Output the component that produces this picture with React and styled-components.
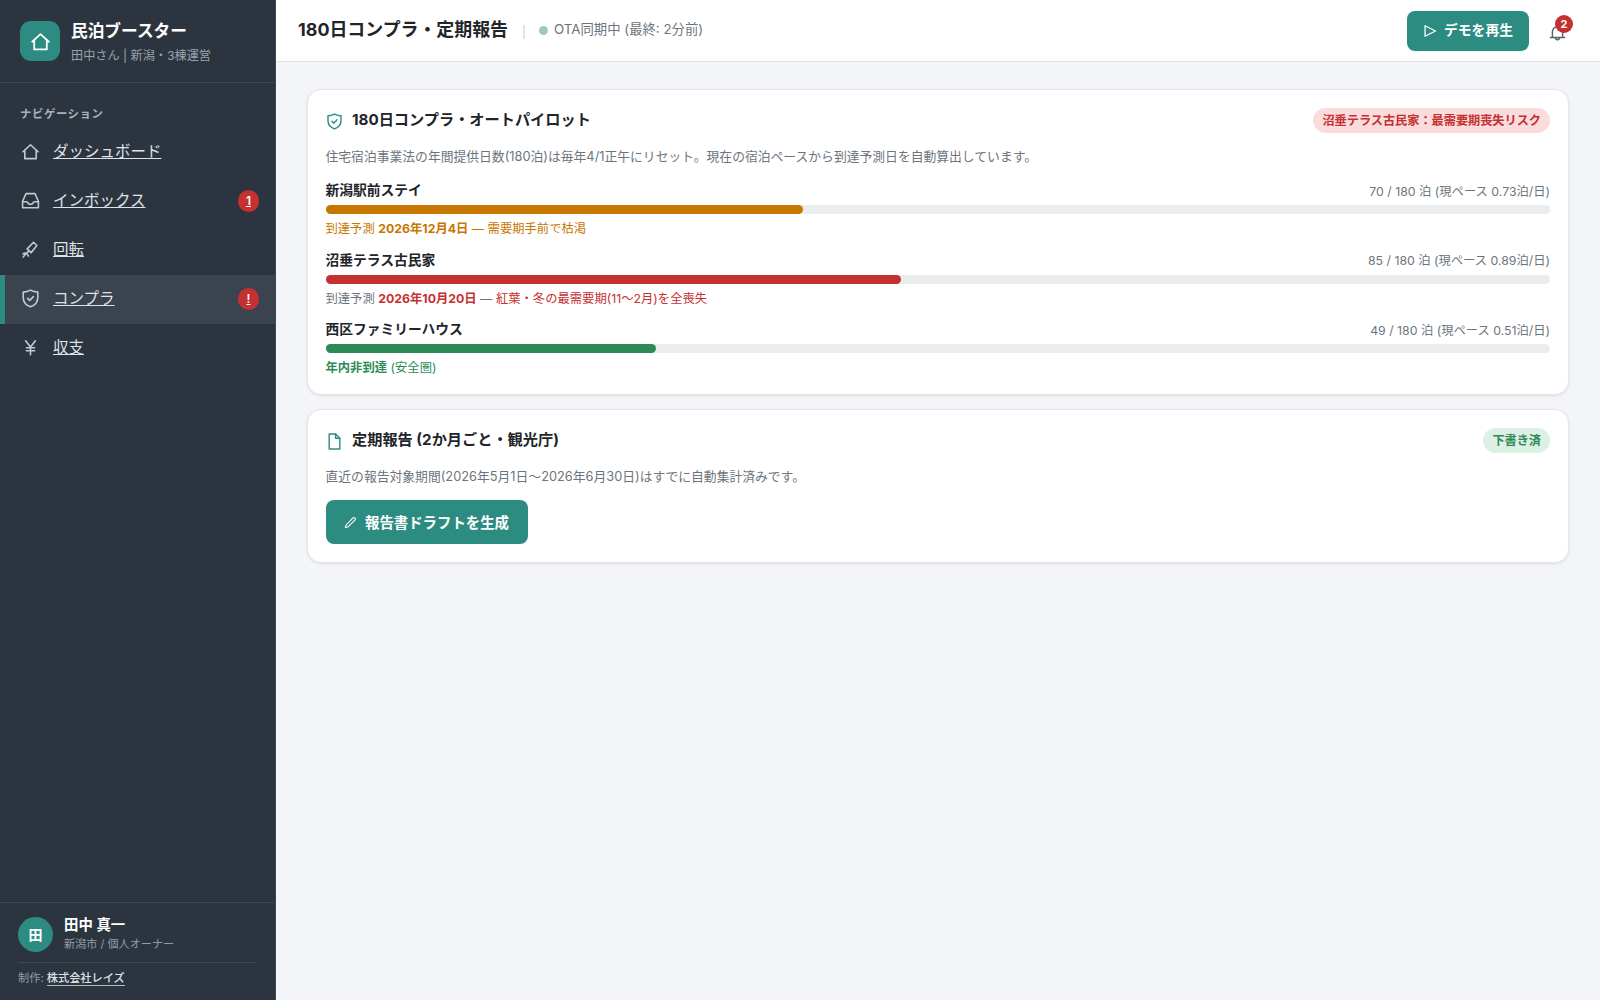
import React from "react";
import styled, { createGlobalStyle } from "styled-components";

const GlobalStyle = createGlobalStyle`
  * {
    box-sizing: border-box;
    margin: 0;
    padding: 0;
  }
  body {
    font-family: Inter, "Noto Sans CJK JP", sans-serif;
    background: #f4f5f8;
    color: #212529;
    overflow: hidden;
  }
`;

const Tone = styled.span`
  color: ${(p) => p.$color};
`;

const paths = {
  home: (
    <>
      <path d="M2.5 12.3 12 3.5l9.500 8.800" />
      <path d="M4.800 10.600V21h14.400V10.600" />
    </>
  ),
  inbox: (
    <>
      <path d="M6.300 3.300h11.400L22 13v8.200H2V13z" />
      <path d="M2 13.500h5.200c1 0 1.400 3.400 4.800 3.400s3.800-3.400 4.800-3.400H22" />
    </>
  ),
  broom: (
    <>
      <path d="M15.800 2.800 20 7l-7.200 9-5-4.800z" />
      <path d="m10.200 13.600-3.600 3.600M2.500 17.500c3-1.800 5.500-1.200 6.800 2.800M6 17.500l-3.200 4" />
    </>
  ),
  shield: (
    <>
      <path d="M12 1.500c2.800 1.600 5.800 2.400 9.200 2.400V11c0 5.700-3.600 9.400-9.200 11.500C6.400 20.400 2.800 16.700 2.800 11V3.900c3.400 0 6.400-.8 9.200-2.400z" />
      <path d="m8.400 11.800 2.600 2.500 4.600-4.600" />
    </>
  ),
  yen: (
    <path d="M5.800 3.500l6.200 8 6.200-8M12 11.500V21M6.800 12.400h10.400M6.800 16.200h10.400" />
  ),
  file: (
    <>
      <path d="M4.500 1.500h9l6 6V22.500h-15z" />
      <path d="M13.500 1.500v6h6" />
    </>
  ),
  pencil: (
    <path d="M2.500 21.500l1.500-5L16.800 3.600a2.200 2.200 0 0 1 3.100 0l.5.500a2.200 2.200 0 0 1 0 3.100L7.500 20z" />
  ),
  play: <path d="M3.500 3v18L21.500 12z" />,
  bell: (
    <>
      <path d="M2 19h20M4.800 19V11a7.200 7.200 0 0 1 14.400 0v8" />
      <path d="M9 19.200a3 3 0 0 0 6 0" />
    </>
  ),
};

const Icon = ({ name, size = 19, stroke = 2 }) => (
  <svg
    width={size}
    height={size}
    viewBox="0 0 24 24"
    fill="none"
    stroke="currentColor"
    strokeWidth={stroke}
    strokeLinejoin="round"
    strokeLinecap="round"
  >
    {paths[name]}
  </svg>
);

const navItems = [
  { icon: "home", label: "ダッシュボード" },
  { icon: "inbox", label: "インボックス", badge: "1" },
  { icon: "broom", label: "回転" },
  { icon: "shield", label: "コンプラ", badge: "!", active: true },
  { icon: "yen", label: "収支" },
];

const properties = [
  {
    name: "新潟駅前ステイ",
    stat: "70 / 180 泊 (現ペース 0.73泊/日)",
    percent: 39,
    color: "#c77700",
    note: (
      <Tone $color="#c77700">
        到達予測 <b>2026年12月4日</b> — 需要期手前で枯渇
      </Tone>
    ),
  },
  {
    name: "沼垂テラス古民家",
    stat: "85 / 180 泊 (現ペース 0.89泊/日)",
    percent: 47,
    color: "#c53030",
    note: (
      <>
        到達予測{" "}
        <Tone $color="#c53030">
          <b>2026年10月20日</b>
        </Tone>{" "}
        — <Tone $color="#c53030">紅葉・冬の最需要期(11〜2月)を全喪失</Tone>
      </>
    ),
  },
  {
    name: "西区ファミリーハウス",
    stat: "49 / 180 泊 (現ペース 0.51泊/日)",
    percent: 27,
    color: "#2d8a57",
    note: (
      <Tone $color="#2d8a57">
        <b>年内非到達</b> (安全圏)
      </Tone>
    ),
  },
];

const App = () => {
  return (
    <Layout>
      <GlobalStyle />
      <Sidebar>
        <Brand>
          <Logo>
            <Icon name="home" size={21} />
          </Logo>
          <div>
            <BrandName>民泊ブースター</BrandName>
            <BrandSub>田中さん | 新潟・3棟運営</BrandSub>
          </div>
        </Brand>
        <NavLabel>ナビゲーション</NavLabel>
        <nav>
          {navItems.map((item) => (
            <NavItem key={item.label} $active={item.active} href="#">
              <Icon name={item.icon} />
              <NavText>{item.label}</NavText>
              {item.badge && <NavBadge>{item.badge}</NavBadge>}
            </NavItem>
          ))}
        </nav>
        <SideFooter>
          <User>
            <Avatar>田</Avatar>
            <div>
              <UserName>田中 真一</UserName>
              <UserSub>新潟市 / 個人オーナー</UserSub>
            </div>
          </User>
          <Credit>
            制作: <a href="#">株式会社レイズ</a>
          </Credit>
        </SideFooter>
      </Sidebar>
      <Main>
        <Topbar>
          <PageTitle>180日コンプラ・定期報告</PageTitle>
          <Divider />
          <SyncDot />
          <SyncText>OTA同期中 (最終: 2分前)</SyncText>
          <DemoButton>
            <Icon name="play" size={14} stroke={2.2} />
            デモを再生
          </DemoButton>
          <Bell>
            <Icon name="bell" size={17} />
            <BellBadge>2</BellBadge>
          </Bell>
        </Topbar>
        <Content>
          <Card $height={306}>
            <CardHead>
              <Icon name="shield" size={17} />
              <h2>180日コンプラ・オートパイロット</h2>
              <Pill $bg="#fbdcdc" $color="#c53030">
                沼垂テラス古民家：最需要期喪失リスク
              </Pill>
            </CardHead>
            <Description>
              住宅宿泊事業法の年間提供日数(180泊)は毎年4/1正午にリセット。現在の宿泊ペースから到達予測日を自動算出しています。
            </Description>
            <Properties>
              {properties.map((p) => (
                <div key={p.name}>
                  <PropertyHead>
                    <strong>{p.name}</strong>
                    <span>{p.stat}</span>
                  </PropertyHead>
                  <Track>
                    <Fill $color={p.color} style={{ width: `${p.percent}%` }} />
                  </Track>
                  <Note>{p.note}</Note>
                </div>
              ))}
            </Properties>
          </Card>
          <Card $height={154}>
            <CardHead>
              <Icon name="file" size={17} />
              <h2>定期報告 (2か月ごと・観光庁)</h2>
              <Pill $bg="#dcf0e4" $color="#2d8a57">
                下書き済
              </Pill>
            </CardHead>
            <Description>
              直近の報告対象期間(2026年5月1日〜2026年6月30日)はすでに自動集計済みです。
            </Description>
            <ReportButton>
              <Icon name="pencil" size={13} />
              報告書ドラフトを生成
            </ReportButton>
          </Card>
        </Content>
      </Main>
    </Layout>
  );
};

export default App;

const Layout = styled.div`
  display: flex;
  width: 100%;
  height: 100vh;
`;

const Sidebar = styled.aside`
  display: flex;
  flex-direction: column;
  width: 276px;
  flex-shrink: 0;
  background: #2c353f;
  border-right: 1px solid #3d4751;
  color: #fff;
`;

const Brand = styled.div`
  display: flex;
  align-items: center;
  gap: 11px;
  height: 83px;
  padding: 0 20px;
  border-bottom: 1px solid #3d4751;
`;

const Logo = styled.div`
  display: flex;
  align-items: center;
  justify-content: center;
  width: 40px;
  height: 40px;
  border-radius: 11px;
  background: #2d8c82;
`;

const BrandName = styled.div`
  font-size: 16.7px;
  font-weight: 700;
  line-height: 26px;
`;

const BrandSub = styled.div`
  font-size: 12.16px;
  line-height: 18px;
  margin-top: 3px;
  color: #9aa2ab;
`;

const NavLabel = styled.div`
  padding: 22px 20px 5px;
  font-size: 11.4px;
  font-weight: 600;
  letter-spacing: 0.05em;
  line-height: 18px;
  color: #a9b0b8;
`;

const NavItem = styled.a`
  display: flex;
  align-items: center;
  gap: 13px;
  height: 49px;
  padding: 0 16px 2px 16px;
  border-left: 5px solid ${(p) => (p.$active ? "#2d8c82" : "transparent")};
  background: ${(p) => (p.$active ? "#3b444e" : "transparent")};
  color: #dfe2e6;
  font-size: 15.5px;
  text-decoration: none;
  svg {
    color: #c3c9d0;
  }
`;

const NavText = styled.span`
  padding-bottom: 3px;
  text-decoration: underline;
`;

const NavBadge = styled.span`
  display: flex;
  align-items: center;
  justify-content: center;
  min-width: 21px;
  height: 22px;
  margin-left: auto;
  padding: 0 7px;
  border-radius: 11px;
  background: #c53030;
  color: #fff;
  font-size: 12px;
  font-weight: 600;
  text-decoration: underline;
`;

const SideFooter = styled.div`
  margin-top: auto;
  height: 98px;
  padding: 14px 18px 0;
  border-top: 1px solid #3d4751;
`;

const User = styled.div`
  display: flex;
  align-items: center;
  gap: 11px;
  height: 46px;
  padding-bottom: 10px;
  border-bottom: 1px solid #3d4751;
`;

const Avatar = styled.div`
  display: flex;
  align-items: center;
  justify-content: center;
  width: 35px;
  height: 35px;
  padding-bottom: 2px;
  border-radius: 50%;
  background: #2d8c82;
  font-size: 14px;
  font-weight: 700;
`;

const UserName = styled.div`
  font-size: 14.4px;
  font-weight: 600;
  line-height: 20px;
`;

const UserSub = styled.div`
  padding-bottom: 2px;
  font-size: 11.1px;
  line-height: 18px;
  color: #939ba4;
`;

const Credit = styled.div`
  padding-top: 6px;
  font-size: 11.2px;
  line-height: 18px;
  color: #939ba4;
  a {
    color: #dfe2e6;
    font-weight: 500;
    text-decoration: none;
    border-bottom: 1px solid #b4bac1;
  }
`;

const Main = styled.main`
  flex: 1;
  min-width: 0;
`;

const Topbar = styled.header`
  display: flex;
  align-items: center;
  height: 62px;
  padding: 0 33px 0 22px;
  background: #fff;
  border-bottom: 1px solid #dfe1e5;
`;

const PageTitle = styled.h1`
  padding-bottom: 1px;
  font-size: 17.92px;
  font-weight: 700;
  line-height: 26px;
`;

const Divider = styled.span`
  width: 2px;
  height: 14px;
  margin: 3px 14px 0 15px;
  background: #e1e4e8;
`;

const SyncDot = styled.span`
  width: 9px;
  height: 9px;
  margin-right: 6px;
  border-radius: 50%;
  background: #9ccbb0;
`;

const SyncText = styled.span`
  font-size: 13.35px;
  line-height: 20px;
  margin-bottom: 4px;
  color: #6c757d;
`;

const DemoButton = styled.button`
  display: flex;
  align-items: center;
  justify-content: center;
  gap: 7px;
  width: 122px;
  height: 40px;
  margin-left: auto;
  padding-bottom: 3px;
  border: none;
  border-radius: 8px;
  background: #2d8c82;
  color: #fff;
  font-family: inherit;
  font-size: 13.8px;
  font-weight: 600;
  svg {
    margin-top: 3px;
  }
`;

const Bell = styled.div`
  position: relative;
  display: flex;
  margin: 4px 1px 0 20px;
  color: #56616c;
`;

const BellBadge = styled.span`
  position: absolute;
  top: -9px;
  right: -7px;
  width: 18px;
  height: 18px;
  border-radius: 50%;
  background: #c53030;
  color: #fff;
  font-size: 11px;
  font-weight: 700;
  line-height: 18px;
  text-align: center;
`;

const Content = styled.div`
  display: flex;
  flex-direction: column;
  gap: 14px;
  padding: 27px 31px;
`;

const Card = styled.section`
  height: ${(p) => p.$height}px;
  padding: 17px 18px 0 17.5px;
  background: #fff;
  border: 1px solid #e4e6ea;
  border-radius: 14px;
  box-shadow: 0 1px 3px rgba(30, 40, 60, 0.1);
`;

const CardHead = styled.div`
  display: flex;
  align-items: center;
  gap: 9px;
  height: 26px;
  svg {
    margin: 2px 0 0 0.5px;
    color: #2d8c82;
  }
  h2 {
    font-size: 15.2px;
    font-weight: 700;
    line-height: 24px;
  }
`;

const Pill = styled.span`
  margin-left: auto;
  padding: 0 9px;
  border-radius: 13px;
  background: ${(p) => p.$bg};
  color: ${(p) => p.$color};
  font-size: 12.16px;
  font-weight: 600;
  line-height: 25px;
`;

const Description = styled.p`
  margin-top: 14px;
  font-size: 12.8px;
  line-height: 20px;
  color: #6c757d;
`;

const Properties = styled.div`
  display: flex;
  flex-direction: column;
  gap: 9.5px;
  margin-top: 13px;
`;

const PropertyHead = styled.div`
  display: flex;
  align-items: center;
  justify-content: space-between;
  height: 20px;
  strong {
    padding-bottom: 2px;
    font-size: 13.76px;
    font-weight: 600;
  }
  span {
    padding-top: 1px;
    font-size: 12.3px;
    color: #6c757d;
  }
`;

const Track = styled.div`
  height: 9px;
  margin-top: 5px;
  border-radius: 5px;
  background: #ebecee;
`;

const Fill = styled.div`
  height: 100%;
  border-radius: 5px;
  background: ${(p) => p.$color};
`;

const Note = styled.div`
  margin-top: 5px;
  padding-bottom: 1px;
  font-size: 12.32px;
  line-height: 20px;
  color: #6c757d;
  b {
    font-weight: 700;
  }
`;

const ReportButton = styled.button`
  display: flex;
  align-items: center;
  justify-content: center;
  gap: 8px;
  width: 202px;
  height: 44px;
  margin-top: 13px;
  padding-bottom: 2px;
  border: none;
  border-radius: 8px;
  background: #2d8c82;
  color: #fff;
  font-family: inherit;
  font-size: 14.4px;
  font-weight: 600;
  svg {
    margin-top: 2px;
  }
`;
